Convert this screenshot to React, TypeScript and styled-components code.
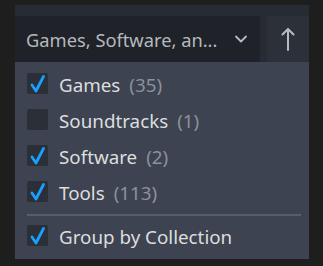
import React from 'react'
import styled, { createGlobalStyle } from 'styled-components'

const GlobalStyle = createGlobalStyle`
  html, body {
    margin: 0;
    background: #1e1e1f;
    font-family: "Noto Sans", "Open Sans", sans-serif;
  }
`

const items = [
  { label: 'Games', count: 35, checked: true },
  { label: 'Soundtracks', count: 1, checked: false },
  { label: 'Software', count: 2, checked: true },
  { label: 'Tools', count: 113, checked: true },
]

function Check({ checked }: { checked: boolean }) {
  return (
    <Box>
      {checked && (
        <svg width="21" height="21" viewBox="0 0 21 21">
          <path d="M5 12 L9 18 L16.5 3.5" fill="none" stroke="#1a9fff" strokeWidth="2.8" strokeLinecap="round" strokeLinejoin="round" />
        </svg>
      )}
    </Box>
  )
}

export default function App() {
  return (
    <Page>
      <GlobalStyle />
      <Panel>
        <Header>
          <Dropdown>
            <DropLabel>Games, Software, an...</DropLabel>
            <svg width="14" height="10" viewBox="0 0 14 10">
              <path d="M2 2.5 L7 7.5 L12 2.5" fill="none" stroke="#b8bcc2" strokeWidth="1.8" strokeLinecap="round" strokeLinejoin="round" />
            </svg>
          </Dropdown>
          <SortButton>
            <svg width="14" height="26" viewBox="0 0 14 26">
              <path d="M7 24 V3 M1.5 8.5 L7 3 L12.5 8.5" fill="none" stroke="#b8bcc2" strokeWidth="2" strokeLinecap="round" strokeLinejoin="round" />
            </svg>
          </SortButton>
        </Header>
        <Menu>
          {items.map(it => (
            <Row key={it.label}>
              <Check checked={it.checked} />
              <Label>
                {it.label}<Count>({it.count})</Count>
              </Label>
            </Row>
          ))}
          <Separator />
          <Row>
            <Check checked={true} />
            <Label>Group by Collection</Label>
          </Row>
        </Menu>
      </Panel>
    </Page>
  )
}

const Page = styled.div`
  width: 323px;
  height: 266px;
  padding: 5px 0 0 15px;
  box-sizing: border-box;
`

const Panel = styled.div`
  width: 294px;
  height: 254px;
  display: flex;
  flex-direction: column;
  background: #272b33;
`

const Header = styled.div`
  display: flex;
  gap: 7px;
  padding-top: 11px;
`

const Dropdown = styled.div`
  width: 245px;
  height: 46px;
  box-sizing: border-box;
  background: #1f2228;
  display: flex;
  align-items: center;
  justify-content: space-between;
  padding: 0 12px 0 11px;
`

const DropLabel = styled.span`
  color: #b5b9bd;
  font-size: 18.3px;
  white-space: nowrap;
`

const SortButton = styled.div`
  flex: 1;
  height: 46px;
  background: #2c3039;
  display: flex;
  align-items: center;
  justify-content: center;
`

const Menu = styled.div`
  flex: 1;
  background: #3d4350;
  padding: 3px 8px 0 12px;
  display: flex;
  flex-direction: column;
`

const Row = styled.div`
  display: flex;
  align-items: center;
  gap: 11px;
  height: 36px;
`

const Box = styled.div`
  width: 21px;
  height: 21px;
  background: #2a2f38;
  border-radius: 2px;
  display: flex;
`

const Label = styled.span`
  margin-top: 4px;
  color: #dcdedf;
  font-size: 18.8px;
  white-space: nowrap;
`

const Count = styled.span`
  color: #8b929a;
  margin-left: 9px;
`

const Separator = styled.div`
  height: 2px;
  background: #575e6b;
  margin: 5px 0 1px 0;
`
